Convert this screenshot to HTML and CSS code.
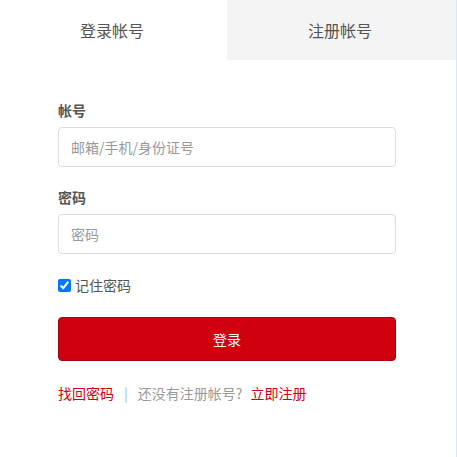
FILE: index.html
```html
<!DOCTYPE html>
<html lang="zh-CN">
<head>
<meta charset="utf-8">
<title>登录</title>
<link rel="stylesheet" href="styles.css">
</head>
<body>
<div class="panel">
  <div class="tabs">
    <div class="tab active">登录帐号</div>
    <div class="tab">注册帐号</div>
  </div>
  <form class="form">
    <label class="label">帐号</label>
    <input class="input" type="text" placeholder="邮箱/手机/身份证号">
    <label class="label label-2">密码</label>
    <input class="input" type="password" placeholder="密码">
    <div class="remember">
      <input class="check" type="checkbox" checked>
      <span>记住密码</span>
    </div>
    <button class="btn" type="button">登录</button>
    <div class="links">
      <a class="red">找回密码</a>
      <span class="sep">|</span>
      <span class="muted">还没有注册帐号?</span>
      <a class="red">立即注册</a>
    </div>
  </form>
</div>
</body>
</html>
```
FILE: styles.css
```css
* { box-sizing: border-box; }
html, body { margin: 0; padding: 0; background: #fff; }
body {
  font-family: "Microsoft YaHei", "Noto Sans CJK SC", sans-serif;
  font-size: 14px;
  color: #333;
  width: 457px;
  height: 457px;
  overflow: hidden;
}
.panel {
  width: 457px;
  height: 457px;
  border-right: 1px solid #dbe8f3;
}
.tabs {
  display: flex;
  height: 60px;
}
.tab {
  flex: 1;
  display: flex;
  align-items: center;
  justify-content: center;
  padding-right: 3px;
  font-size: 16px;
  color: #555;
  background: #f4f4f4;
}
.tab.active { flex: 0 0 227px; background: #fff; }
.form {
  display: flex;
  flex-direction: column;
  padding: 40px 60px 0 58px;
}
.label {
  display: block;
  line-height: 20px;
  font-size: 14px;
  font-weight: bold;
  color: #555;
  margin-bottom: 7px;
}
.label-2 { margin-top: 20px; }
.input {
  width: 338px;
  height: 40px;
  border: 1px solid #ddd;
  border-radius: 4px;
  padding: 0 12px;
  font-family: inherit;
  font-size: 14px;
  color: #333;
  outline: none;
}
.input::placeholder { color: #999; }
.remember {
  display: flex;
  align-items: center;
  margin-top: 21px;
  line-height: 20px;
  color: #555;
}
.check {
  width: 13px;
  height: 13px;
  margin: 0 4px 0 0;
}
.btn {
  margin-top: 22px;
  width: 338px;
  height: 44px;
  background: #d0000f;
  border: 1px solid #a8000c;
  border-radius: 4px;
  color: #fff;
  font-family: inherit;
  font-size: 14px;
}
.links {
  margin-top: 22px;
  line-height: 20px;
  font-size: 14px;
  display: flex;
}
.red { color: #d0000f; }
.sep { color: #aab6c4; margin: 0 10px; }
.muted { color: #999; margin-right: 8px; }
```
